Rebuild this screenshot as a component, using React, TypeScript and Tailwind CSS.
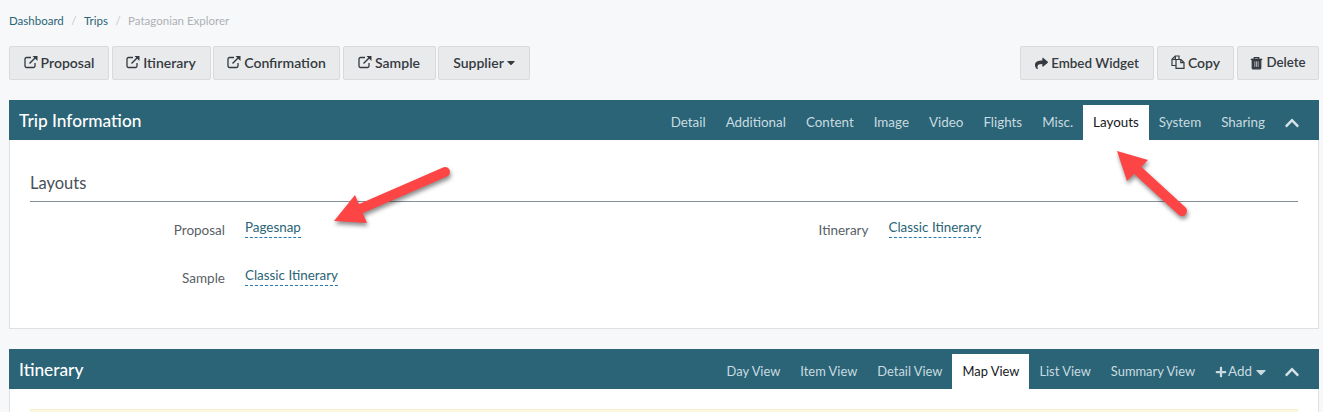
import { FaCaretDown, FaChevronUp, FaPlus, FaShare } from 'react-icons/fa';

const ExternalIcon = () => (
    <svg viewBox="0 0 14 14" className="w-[14px] h-[14px] shrink-0" fill="none" stroke="currentColor">
        <path d="M11 8v3a1.5 1.5 0 0 1-1.5 1.5h-7A1.5 1.5 0 0 1 1 11V4a1.5 1.5 0 0 1 1.5-1.5H7" strokeWidth="1.3" />
        <path d="M5.5 8.5 12 2" strokeWidth="1.5" />
        <path d="M8.5 1h5v5z" fill="currentColor" stroke="none" />
    </svg>
);

const CopyIcon = () => (
    <svg viewBox="0 0 14 14" className="w-[14px] h-[14px] shrink-0" fill="none" stroke="currentColor" strokeWidth="1.2">
        <path d="M5 10.5H1V4.2L4.2 1H8v3.5" />
        <path d="M4.4 1.2v3.2H1.2" />
        <path d="M5 4.5h5l3 3V13.4H5z" />
        <path d="M9.8 4.7v3h3" />
    </svg>
);

const TrashIcon = () => (
    <svg viewBox="0 0 14 14" className="w-[13px] h-[14px] shrink-0" fill="none" stroke="currentColor" strokeWidth="1.3">
        <path d="M.8 3.2h12.4" strokeWidth="1.4" />
        <path d="M4.6 3V1.2h4.8V3" />
        <path d="M2.4 3.2v9.1a1 1 0 0 0 1 1h7.2a1 1 0 0 0 1-1V3.200z" fill="currentColor" />
        <path d="M5.2 5.200v6M7 5.200v6M8.800 5.200v6" stroke="#c3c5c8" strokeWidth="0.9" />
    </svg>
);

const leftButtons = [
    { label: 'Proposal', width: 'w-[100px]' },
    { label: 'Itinerary', width: 'w-[99px]' },
    { label: 'Confirmation', width: 'w-[127px]' },
    { label: 'Sample', width: 'w-[93px]' },
];

const tripTabs = ['Detail', 'Additional', 'Content', 'Image', 'Video', 'Flights', 'Misc.', 'Layouts', 'System', 'Sharing'];
const itineraryTabs = ['Day View', 'Item View', 'Detail View', 'Map View', 'List View', 'Summary View'];

const Btn = ({ className, children }: { className: string; children: React.ReactNode }) => (
    <button type="button" className={`h-[34px] flex items-center justify-center gap-[3px] bg-[#e9eaec] border border-[#d9dadc] rounded-[2px] text-[#343a40] font-semibold ${className}`}>
        {children}
    </button>
);

const PanelHeader = ({ title, tabs, active, size, children }: { title: string; tabs: string[]; active: string; size: string; children: React.ReactNode }) => (
    <div className="h-10 bg-[#2a6476] flex items-end justify-between pl-[10px] pr-5">
        <h2 className="self-center pt-[2px] text-white text-[17.3px] leading-none font-medium">{title}</h2>
        <ul className="flex items-end h-[35px]">
            {tabs.map((tab) => (
                <li key={tab} className={`h-[35px] px-[10px] flex items-center ${size} ${tab === active ? 'bg-white text-[#16181b]' : 'text-[#c9dbe0]'}`}>
                    {tab}
                </li>
            ))}
            {children}
        </ul>
    </div>
);

const Field = ({ label, value }: { label: string; value: string }) => (
    <div className="flex items-center h-[48px]">
        <span className="w-[195px] text-right text-[13.5px] text-[#5a5f66]">{label}</span>
        <span className="ml-5 -mt-1 text-[13.4px] leading-[19px] text-[#2a6476] border-b border-dashed border-[#2a7ab0]">{value}</span>
    </div>
);

const Collapse = () => (
    <li className="h-[35px] flex items-center pl-[10px] text-[#d5e3e7]">
        <FaChevronUp className="w-[14px] h-[16px]" />
    </li>
);

export default function App() {
    return (
        <div className="relative w-[1323px] h-[412px] overflow-hidden bg-[#f7f8fa] pl-[9px] pr-1 font-['Lato','Noto_Sans',sans-serif]">
            <nav className="h-[46px] flex items-center pb-[4px] text-[11.5px] text-[#2a6476]">
                <span>Dashboard</span>
                <span className="mx-[7.5px] text-[#c4c8cc]">/</span>
                <span>Trips</span>
                <span className="mx-[7.5px] text-[#c4c8cc]">/</span>
                <span className="text-[#adb1b6]">Patagonian Explorer</span>
            </nav>

            <div className="flex justify-between">
                <div className="flex gap-[2.5px]">
                    {leftButtons.map((b) => (
                        <Btn key={b.label} className={`pb-[2px] text-[14px] ${b.width}`}>
                            <ExternalIcon />
                            {b.label}
                        </Btn>
                    ))}
                    <Btn className="w-[92px] pb-[2px] text-[14px]">
                        Supplier
                        <FaCaretDown className="w-[8px] h-[13px]" />
                    </Btn>
                </div>
                <div className="flex gap-[3px]">
                    <Btn className="w-[134px] text-[13.4px]">
                        <FaShare className="w-[13px] h-[13px]" />
                        Embed Widget
                    </Btn>
                    <Btn className="w-[77px] pb-[2px] text-[14px]">
                        <CopyIcon />
                        Copy
                    </Btn>
                    <Btn className="w-[82px] text-[13.3px]">
                        <TrashIcon />
                        Delete
                    </Btn>
                </div>
            </div>

            <section className="mt-5 h-[229px] bg-white border-x border-b border-[#dfe0e2]">
                <div className="-mx-px">
                    <PanelHeader title="Trip Information" tabs={tripTabs} active="Layouts" size="text-[13.4px]">
                        <Collapse />
                    </PanelHeader>
                </div>
                <div className="px-5">
                    <h3 className="mt-[33px] h-[29px] border-b border-[#868e96] text-[#495057] text-[16.5px] leading-5">Layouts</h3>
                    <div className="mt-[4px] grid grid-cols-2 gap-x-[19px]">
                        <Field label="Proposal" value="Pagesnap" />
                        <Field label="Itinerary" value="Classic Itinerary" />
                        <Field label="Sample" value="Classic Itinerary" />
                    </div>
                </div>
            </section>

            <section className="mt-5 h-[80px] bg-white border-x border-[#dfe0e2]">
                <div className="-mx-px">
                    <PanelHeader title="Itinerary" tabs={itineraryTabs} active="Map View" size="text-[12.9px]">
                        <li className="h-[35px] flex items-center gap-[1px] pl-[10px] pr-[9px] text-[13.4px] text-[#c9dbe0]">
                            <FaPlus className="w-[12px] h-[12px]" />
                            Add
                            <FaCaretDown className="ml-[3px] w-[10px] h-[16px]" />
                        </li>
                        <Collapse />
                    </PanelHeader>
                </div>
                <div className="mx-5 mt-5 h-8 bg-[#fdf8e1] border border-[#f7efc9]" />
            </section>

            {/* annotation arrows drawn on top of the screenshot */}
            <svg className="absolute inset-0 pointer-events-none drop-shadow-[1px_3px_2px_rgba(0,0,0,0.45)]" width="1323" height="412" viewBox="0 0 1323 412">
                <path d="M445 172 360 209" stroke="#fe4545" strokeWidth="10" strokeLinecap="round" fill="none" />
                <path d="M334 221 355 195 367 223z" fill="#fe4545" />
                <path d="M1182 211 1134 167" stroke="#fe4545" strokeWidth="10" strokeLinecap="round" fill="none" />
                <path d="M1117 151 1148 160 1127 181z" fill="#fe4545" />
            </svg>
        </div>
    );
}
